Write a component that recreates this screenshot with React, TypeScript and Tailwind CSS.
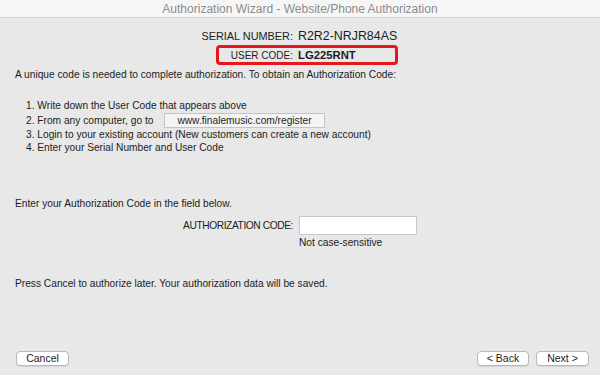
const App = () => {
  return (
    <div className="w-[600px] h-[375px] bg-[#e8e8e8] flex flex-col font-['Liberation_Sans',Arial,sans-serif] text-[#1c1c1c] text-[10.2px] overflow-hidden">
      <div className="h-[18px] bg-[#f6f6f6] border-b border-[#d4d4d4] flex items-center justify-center text-[12px] text-[#8c8c8c]">
        Authorization Wizard - Website/Phone Authorization
      </div>
      <div className="flex flex-col flex-1 px-[15px]">
        <div className="flex items-center h-[14px] mt-[11px]">
          <span className="w-[278px] text-right text-[10.9px]">SERIAL NUMBER:</span>
          <span className="ml-[5px] text-[12.4px]">R2R2-NRJR84AS</span>
        </div>
        <div className="flex items-center h-[20px] mt-[2px] ml-[201px] w-[182px] border-[3px] border-[#e5161c] rounded-[4px]">
          <span className="w-[74px] text-right text-[10px]">USER CODE:</span>
          <span className="ml-[5px] text-[11.3px] font-bold">LG225RNT</span>
        </div>
        <p className="mt-[3px] leading-[13px]">A unique code is needed to complete authorization. To obtain an Authorization Code:</p>
        <ol className="mt-[18px] ml-[11px] flex flex-col">
          <li className="h-[14px] flex items-center">1. Write down the User Code that appears above</li>
          <li className="h-[15px] flex items-center">
            <span className="w-[138px]">2. From any computer, go to</span>
            <span className="w-[161px] h-[15px] bg-[#f4f4f4] border border-[#c4c4c4] flex items-center justify-center">www.finalemusic.com/register</span>
          </li>
          <li className="h-[13px] flex items-center">3. Login to your existing account (New customers can create a new account)</li>
          <li className="h-[13px] flex items-center">4. Enter your Serial Number and User Code</li>
        </ol>
        <p className="mt-[43px] leading-[13px]">Enter your Authorization Code in the field below.</p>
        <div className="flex items-center mt-[6px]">
          <span className="w-[278px] text-right text-[10.2px] tracking-[-0.4px]">AUTHORIZATION CODE:</span>
          <div className="ml-[6px] w-[118px] h-[19px] bg-white border border-[#c8c8c8]" />
        </div>
        <p className="ml-[284px] mt-[1px] leading-[13px]">Not case-sensitive</p>
        <p className="mt-[28px] leading-[13px]">Press Cancel to authorize later. Your authorization data will be saved.</p>
        <div className="flex justify-between items-center mt-auto mb-[9px] px-[1px]">
          <button className="w-[53px] h-[15px] bg-white border border-[#b8b8b8] rounded-[4px] shadow-[0_1px_0_rgba(0,0,0,0.08)] text-[10.5px] leading-none">Cancel</button>
          <div className="flex gap-[7px] mr-[-5px]">
            <button className="w-[52px] h-[15px] bg-white border border-[#b8b8b8] rounded-[4px] shadow-[0_1px_0_rgba(0,0,0,0.08)] text-[10.5px] leading-none">&lt; Back</button>
            <button className="w-[53px] h-[15px] bg-white border border-[#b8b8b8] rounded-[4px] shadow-[0_1px_0_rgba(0,0,0,0.08)] text-[10.5px] leading-none">Next &gt;</button>
          </div>
        </div>
      </div>
    </div>
  );
};

export default App;
